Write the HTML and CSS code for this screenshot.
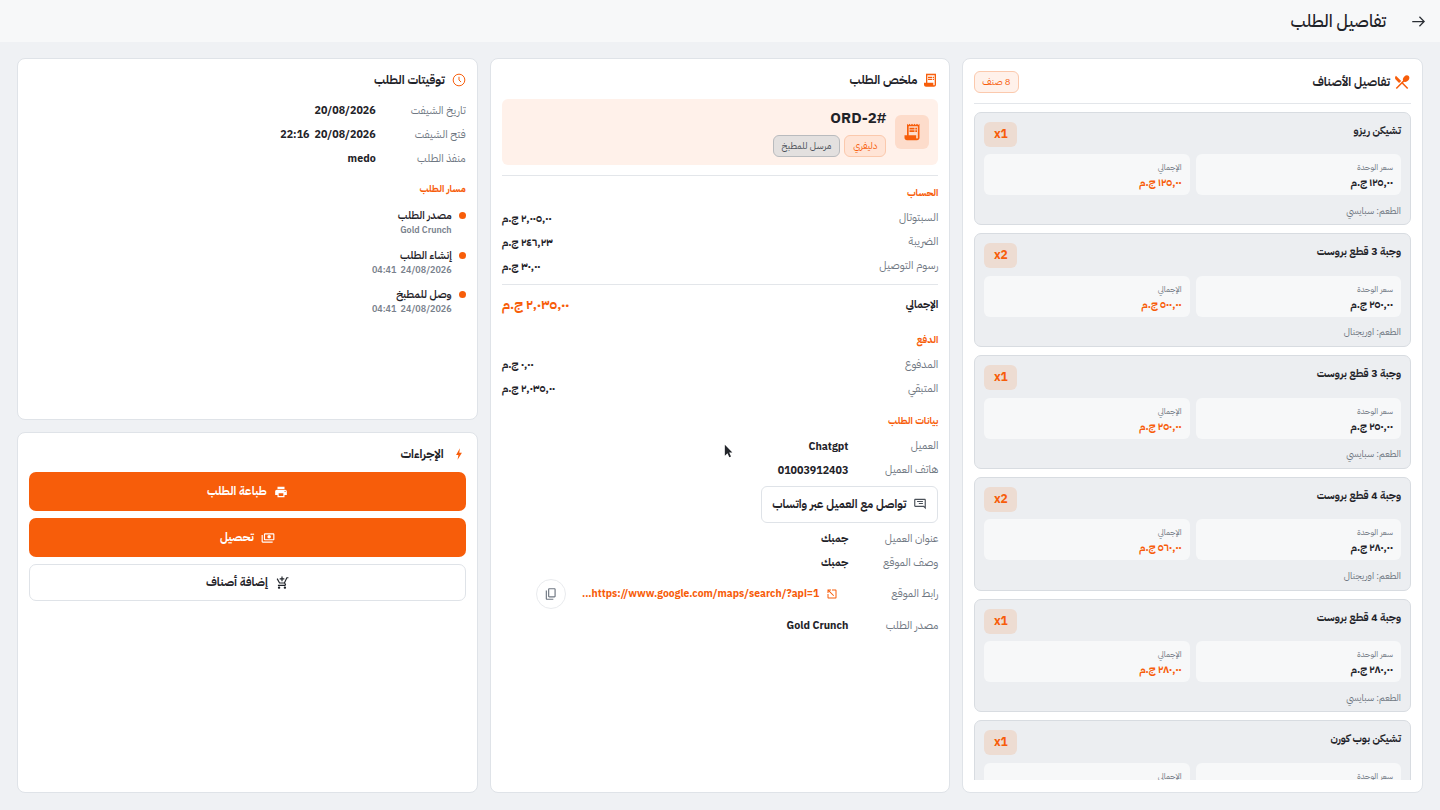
FILE: index.html
```html
<!DOCTYPE html>
<html lang="ar" dir="rtl">

<head>
    <meta charset="utf-8">
    <meta name="viewport" content="width=device-width, initial-scale=1.0">
    <title>تفاصيل الطلب</title>

    <link rel="stylesheet" href="styles.css">

</head>

<body>

    <header class="topbar">
        <svg class="back" viewBox="0 0 24 24"><path d="M2 12h19M13.500 4.500 21 12l-7.500 7.500" /></svg>
        <h1>تفاصيل الطلب</h1>
    </header>

    <main class="cols">

        <!-- الأصناف -->
        <section class="card">
            <div class="items-head">
                <h2 class="title">
                    <svg class="ico fork" viewBox="0 0 24 24"><path d="M8.1 13.34l2.83-2.83L3.91 3.5c-1.56 1.56-1.56 4.09 0 5.66l4.19 4.18zm6.78-1.81c1.53.71 3.68.21 5.27-1.38 1.91-1.91 2.28-4.65.81-6.12-1.46-1.46-4.2-1.1-6.12.81-1.59 1.59-2.09 3.74-1.38 5.27L3.7 19.87l1.41 1.41L12 14.41l6.88 6.88 1.41-1.41L13.41 13l1.47-1.47z" /></svg>
                    تفاصيل الأصناف
                </h2>
                <span class="count">8 صنف</span>
            </div>
            <div class="items">
                <article class="item">
                    <div class="item-top"><h3>تشيكن ريزو</h3><span class="qty">x1</span></div>
                    <div class="prices">
                        <div class="price"><small>سعر الوحدة</small><b>١٢٥,٠٠ ج.م</b></div>
                        <div class="price"><small>الإجمالي</small><b class="or">١٢٥,٠٠ ج.م</b></div>
                    </div>
                    <p class="taste">الطعم: سبايسي</p>
                </article>
                <article class="item">
                    <div class="item-top"><h3>وجبة 3 قطع بروست</h3><span class="qty">x2</span></div>
                    <div class="prices">
                        <div class="price"><small>سعر الوحدة</small><b>٢٥٠,٠٠ ج.م</b></div>
                        <div class="price"><small>الإجمالي</small><b class="or">٥٠٠,٠٠ ج.م</b></div>
                    </div>
                    <p class="taste">الطعم: اوريجنال</p>
                </article>
                <article class="item">
                    <div class="item-top"><h3>وجبة 3 قطع بروست</h3><span class="qty">x1</span></div>
                    <div class="prices">
                        <div class="price"><small>سعر الوحدة</small><b>٢٥٠,٠٠ ج.م</b></div>
                        <div class="price"><small>الإجمالي</small><b class="or">٢٥٠,٠٠ ج.م</b></div>
                    </div>
                    <p class="taste">الطعم: سبايسي</p>
                </article>
                <article class="item">
                    <div class="item-top"><h3>وجبة 4 قطع بروست</h3><span class="qty">x2</span></div>
                    <div class="prices">
                        <div class="price"><small>سعر الوحدة</small><b>٢٨٠,٠٠ ج.م</b></div>
                        <div class="price"><small>الإجمالي</small><b class="or">٥٦٠,٠٠ ج.م</b></div>
                    </div>
                    <p class="taste">الطعم: اوريجنال</p>
                </article>
                <article class="item">
                    <div class="item-top"><h3>وجبة 4 قطع بروست</h3><span class="qty">x1</span></div>
                    <div class="prices">
                        <div class="price"><small>سعر الوحدة</small><b>٢٨٠,٠٠ ج.م</b></div>
                        <div class="price"><small>الإجمالي</small><b class="or">٢٨٠,٠٠ ج.م</b></div>
                    </div>
                    <p class="taste">الطعم: سبايسي</p>
                </article>
                <article class="item">
                    <div class="item-top"><h3>تشيكن بوب كورن</h3><span class="qty">x1</span></div>
                    <div class="prices">
                        <div class="price"><small>سعر الوحدة</small></div>
                        <div class="price"><small>الإجمالي</small></div>
                    </div>
                </article>
            </div>
        </section>

        <!-- الملخص -->
        <section class="card summary">
            <h2 class="title">
                <svg class="ico receipt" viewBox="0 0 24 24"><path d="M19.500 3.500 18 2l-1.500 1.500L15 2l-1.500 1.500L12 2l-1.500 1.500L9 2 7.500 3.500 6 2v14H3v3c0 1.660 1.340 3 3 3h12c1.660 0 3-1.340 3-3V2l-1.500 1.500zM19 19c0 .55-.45 1-1 1s-1-.45-1-1v-3H8V5h11v14zM9 7h6v2H9zm7 0h2v2h-2zM9 10h6v2H9zm7 0h2v2h-2z" /></svg>
                ملخص الطلب
            </h2>
            <div class="hero">
                <div class="hero-ico">
                    <svg class="ico" viewBox="0 0 24 24"><path d="M19.500 3.500 18 2l-1.500 1.500L15 2l-1.500 1.500L12 2l-1.500 1.500L9 2 7.500 3.500 6 2v14H3v3c0 1.660 1.340 3 3 3h12c1.660 0 3-1.340 3-3V2l-1.500 1.500zM19 19c0 .55-.45 1-1 1s-1-.45-1-1v-3H8V5h11v14zM9 7h6v2H9zm7 0h2v2h-2zM9 10h6v2H9zm7 0h2v2h-2z" /></svg>
                </div>
                <div>
                    <div class="order-no">#ORD-2</div>
                    <div class="badges">
                        <span class="badge">دليفري</span>
                        <span class="badge grey">مرسل للمطبخ</span>
                    </div>
                </div>
            </div>

            <h4 class="sec first">الحساب</h4>
            <div class="row"><span>السبتوتال</span><b>٢,٠٠٥,٠٠ ج.م</b></div>
            <div class="row"><span>الضريبة</span><b>٢٤٦,٢٣ ج.م</b></div>
            <div class="row"><span>رسوم التوصيل</span><b>٣٠,٠٠ ج.م</b></div>
            <div class="total"><span>الإجمالي</span><b>٢,٠٣٥,٠٠ ج.م</b></div>

            <h4 class="sec">الدفع</h4>
            <div class="row"><span>المدفوع</span><b>٠,٠٠ ج.م</b></div>
            <div class="row"><span>المتبقي</span><b>٢,٠٣٥,٠٠ ج.م</b></div>

            <h4 class="sec">بيانات الطلب</h4>
            <div class="info"><span>العميل</span><b>Chatgpt</b></div>
            <div class="info"><span>هاتف العميل</span><b>01003912403</b></div>
            <button class="wa">
                <svg class="ico" viewBox="0 0 24 24"><path d="M20 4H4c-1.100 0-2 .9-2 2v16l4-4h14c1.100 0 2-.9 2-2V6c0-1.100-.9-2-2-2zm0 12H5.200L4 17.200V6h16v10zM7 8h10v1.600H7zm0 3.400h7V13H7z" transform="matrix(-1 0 0 1 24 -1)" /></svg>
                تواصل مع العميل عبر واتساب
            </button>
            <div class="info"><span>عنوان العميل</span><b>جمبك</b></div>
            <div class="info"><span>وصف الموقع</span><b>جمبك</b></div>
            <div class="info link-row">
                <span>رابط الموقع</span>
                <a class="maps">
                    <svg class="ico" viewBox="0 0 24 24"><path d="M19 19H5V5h7V3H5c-1.110 0-2 .9-2 2v14c0 1.100.89 2 2 2h14c1.100 0 2-.9 2-2v-7h-2v7zM14 3v2h3.590l-9.830 9.830 1.410 1.410L19 6.410V10h2V3h-7z" transform="matrix(-1 0 0 1 24 0)" /></svg>
                    https://www.google.com/maps/search/?api=1...
                </a>
                <button class="copy">
                    <svg viewBox="0 0 24 24"><path d="M9 18c-1.100 0-2-.9-2-2V4c0-1.100.9-2 2-2h9c1.100 0 2 .9 2 2v12c0 1.100-.9 2-2 2H9zm0-2h9V4H9v12zm-4 6c-1.100 0-2-.9-2-2V6h2v14h11v2H5z" /></svg>
                </button>
            </div>
            <div class="info"><span>مصدر الطلب</span><b>Gold Crunch</b></div>
        </section>

        <!-- العمود الأيسر -->
        <div class="side">
            <section class="card times">
                <h2 class="title">
                    <svg class="ico line" viewBox="0 0 24 24"><circle cx="12" cy="12" r="10" /><path d="M12 6.500V12l3.500 3.500" /></svg>
                    توقيتات الطلب
                </h2>
                <div class="info"><span>تاريخ الشيفت</span><b>20/08/2026</b></div>
                <div class="info"><span>فتح الشيفت</span><b>20/08/2026&nbsp; 22:16</b></div>
                <div class="info"><span>منفذ الطلب</span><b>medo</b></div>

                <h4 class="sec path">مسار الطلب</h4>
                <ul class="track">
                    <li><strong>مصدر الطلب</strong><em>Gold Crunch</em></li>
                    <li><strong>إنشاء الطلب</strong><em>24/08/2026&nbsp; 04:41</em></li>
                    <li><strong>وصل للمطبخ</strong><em>24/08/2026&nbsp; 04:41</em></li>
                </ul>
            </section>

            <section class="card actions">
                <h2 class="title">
                    <svg class="ico" viewBox="0 0 24 24"><path d="M13.500 2 7 13.500h4L9.500 22 17 10h-4.500z" /></svg>
                    الإجراءات
                </h2>
                <button class="btn solid">
                    <svg viewBox="0 0 24 24"><path d="M19 8H5c-1.660 0-3 1.340-3 3v6h4v4h12v-4h4v-6c0-1.660-1.340-3-3-3zm-3 11H8v-5h8v5zm3-7c-.55 0-1-.45-1-1s.45-1 1-1 1 .45 1 1-.45 1-1 1zm-1-9H6v4h12V3z" /></svg>
                    طباعة الطلب
                </button>
                <button class="btn solid">
                    <svg class="flip" viewBox="0 0 24 24"><path d="M19 14V6c0-1.100-.9-2-2-2H3c-1.100 0-2 .9-2 2v8c0 1.100.9 2 2 2h14c1.100 0 2-.9 2-2zm-2 0H3V6h14v8zm-7-7c-1.660 0-3 1.340-3 3s1.340 3 3 3 3-1.340 3-3-1.340-3-3-3zm13 0v11c0 1.100-.9 2-2 2H4v-2h17V7h2z" /></svg>
                    تحصيل
                </button>
                <button class="btn plain">
                    <svg class="flip" viewBox="0 0 24 24"><path d="M11 9h2V6h3V4h-3V1h-2v3H8v2h3v3zm-4 9c-1.100 0-1.990.9-1.990 2S5.900 22 7 22s2-.9 2-2-.9-2-2-2zm10 0c-1.100 0-1.990.9-1.990 2s.89 2 1.990 2 2-.9 2-2-.9-2-2-2zm-9.830-3.250l.03-.12.9-1.630h7.450c.75 0 1.410-.41 1.750-1.030l3.860-7.010L19.420 4h-.01l-1.100 2-2.760 5H8.530l-.13-.27L6.160 6l-.95-2-.94-2H1v2h2l3.600 7.590-1.350 2.450c-.16.28-.25.61-.25.96 0 1.100.9 2 2 2h12v-2H7.420c-.13 0-.25-.11-.25-.25z" /></svg>
                    إضافة أصناف
                </button>
            </section>
        </div>

    </main>

    <svg class="cursor" viewBox="0 0 12 18"><path d="M1 1v13l3.200-3 2.200 5 2-.9-2.200-4.900H10z" /></svg>

</body>

</html>
```

FILE: styles.css
```css
* {
    box-sizing: border-box;
}

html,
body {
    height: 100%;
}

body {
    margin: 0;
    background: #eff1f4;
    color: #1f2329;
    font-family: "IBM Plex Sans Arabic", "Noto Sans", sans-serif;
    font-size: 11px;
    overflow: hidden;
}

h1, h2, h3, h4, p, ul {
    margin: 0;
    padding: 0;
}

svg {
    fill: currentColor;
    flex: none;
}

.topbar {
    height: 42px;
    background: #f7f8f9;
    display: flex;
    align-items: center;
    gap: 25px;
    padding: 0 14px;
}

.back {
    width: 15px;
    height: 15px;
    fill: none;
    stroke: #2a2e34;
    stroke-width: 2;
}

.topbar h1 {
    font-size: 17px;
    font-weight: 500;
}

.cols {
    display: grid;
    grid-template-columns: 1fr 1fr 1fr;
    gap: 12px;
    height: 735px;
    margin: 16px 17px 0;
}

.card {
    background: #fff;
    border: 1px solid #dfe3e8;
    border-radius: 8px;
    padding: 12px 11px;
    min-height: 0;
}

.title {
    display: flex;
    align-items: center;
    gap: 8px;
    font-size: 12px;
    font-weight: 700;
    height: 18px;
}

.ico {
    width: 14px;
    height: 14px;
    color: #f75d0a;
}

.ico.line {
    fill: none;
    stroke: #f75d0a;
    stroke-width: 1.700;
    margin-left: -1px;
}

.ico.fork {
    width: 18px;
    height: 18px;
    margin-left: -5px;
}

.ico.receipt {
    width: 16px;
    height: 16px;
    margin-left: -3px;
}

/* items */
.items-head {
    display: flex;
    justify-content: space-between;
    align-items: center;
    padding-bottom: 10px;
    border-bottom: 1px solid #e3e6ea;
    margin-bottom: 7.500px;
    height: 33px;
}

.count {
    font-size: 9.500px;
    color: #f75d0a;
    background: #fff1ea;
    border: 1px solid #fbc9ad;
    border-radius: 6px;
    padding: 0 7px;
    height: 22px;
    line-height: 20px;
}

.items {
    display: flex;
    flex-direction: column;
    gap: 8px;
    height: 668.500px;
    overflow: hidden;
}

.item {
    flex: none;
    height: 113.800px;
    background: #eceef1;
    border: 1px solid #d8dce1;
    border-radius: 7px;
    padding: 9px;
}

.item-top {
    display: flex;
    justify-content: space-between;
    height: 25px;
    margin-bottom: 7.500px;
}

.item-top h3 {
    font-size: 10.500px;
    font-weight: 700;
    margin-top: 1px;
}

.qty {
    width: 33px;
    height: 25px;
    background: #eddcd2;
    border-radius: 6px;
    color: #f75d0a;
    font-weight: 700;
    font-size: 12px;
    text-align: center;
    line-height: 25px;
}

.prices {
    display: grid;
    grid-template-columns: 1fr 1fr;
    gap: 6px;
}

.price {
    background: #f7f8f9;
    border-radius: 6px;
    height: 41px;
    padding: 7px 8px 0;
}

.price small {
    display: block;
    font-size: 8.300px;
    line-height: 13px;
    color: #6f7782;
}

.price b {
    display: block;
    font-size: 10.500px;
    line-height: 18px;
}

.or {
    color: #f75d0a;
}

.taste {
    font-size: 9.500px;
    color: #6f7782;
    margin-top: 8.500px;
}

/* summary */
.hero {
    display: flex;
    align-items: flex-start;
    gap: 9px;
    height: 66px;
    margin-top: 10px;
    padding: 10px 9px 0;
    background: #fff1ea;
    border-radius: 6px;
}

.hero-ico {
    width: 34px;
    height: 34px;
    margin-top: 6px;
    background: #fddccb;
    border-radius: 6px;
    display: flex;
    align-items: center;
    justify-content: center;
}

.hero-ico .ico {
    width: 20px;
    height: 20px;
}

.order-no {
    font-size: 15px;
    font-weight: 700;
    line-height: 18px;
}

.badges {
    display: flex;
    gap: 4px;
    margin-top: 8px;
}

.badge {
    font-size: 9.500px;
    color: #f75d0a;
    background: #ffe4d6;
    border: 1px solid #fbc9ad;
    border-radius: 6px;
    height: 22px;
    line-height: 20px;
    padding: 0 8px;
}

.badge.grey {
    color: #4b5159;
    background: #e3e0df;
    border-color: #b9bbbe;
}

.sec {
    color: #f75d0a;
    font-size: 9.750px;
    font-weight: 700;
    margin-top: 14px;
    line-height: 14px;
}

.sec.first {
    border-top: 1px solid #e3e6ea;
    margin-top: 10px;
    padding-top: 10px;
}

.row,
.total {
    display: flex;
    justify-content: space-between;
    align-items: center;
    height: 24px;
}

.sec + .row {
    margin-top: 5.500px;
}

.row span,
.info span {
    color: #6f7782;
    font-size: 11px;
}

.row b,
.info b {
    font-size: 10.700px;
    font-weight: 700;
}

.total {
    border-top: 1px solid #e3e6ea;
    height: 40px;
    margin-top: 6px;
    font-size: 10.500px;
    font-weight: 700;
}

.total b {
    font-size: 13.500px;
    color: #f75d0a;
}

.total + .sec {
    margin-top: 9px;
}

.info {
    display: flex;
    align-items: center;
    height: 24px;
}

.info span {
    width: 90px;
    flex: none;
}

.sec + .info {
    margin-top: 5.500px;
}

.wa {
    display: flex;
    align-items: center;
    gap: 7px;
    height: 37px;
    margin: 4px 0 3.500px;
    padding: 0 10px;
    background: #fff;
    border: 1px solid #dfe3e8;
    border-radius: 6px;
    font: 700 11.500px "IBM Plex Sans Arabic", "Noto Sans", sans-serif;
    color: #1f2329;
}

.wa .ico {
    color: #4b5159;
}

.link-row {
    height: 39px;
}

.maps {
    display: flex;
    align-items: center;
    gap: 7px;
    margin-right: 10px;
    color: #f75d0a;
    font-size: 10.400px;
    font-weight: 700;
}

.maps .ico {
    width: 12px;
    height: 12px;
}

.copy {
    width: 30px;
    height: 30px;
    margin-right: 16px;
    padding: 7px;
    background: #fff;
    border: 1px solid #e9ebee;
    border-radius: 50%;
    color: #6f7782;
}

.copy svg {
    display: block;
    width: 14px;
    height: 14px;
}

/* side */
.side {
    display: grid;
    grid-template-rows: 362px 361px;
    gap: 12px;
    min-height: 0;
}

.times .title {
    margin-bottom: 9px;
}

.times .ico {
    margin-left: -1px;
}

.sec.path {
    margin-top: 12px;
}

.track {
    list-style: none;
    margin-top: 12px;
}

.track li {
    position: relative;
    padding-right: 14px;
    height: 39.500px;
}

.track li::before {
    content: "";
    position: absolute;
    right: 0;
    top: 4px;
    width: 7px;
    height: 7px;
    border-radius: 50%;
    background: #f75d0a;
}

.track strong {
    display: block;
    font-size: 10.700px;
    font-weight: 600;
    line-height: 15px;
}

.track em {
    display: block;
    font-style: normal;
    font-size: 9px;
    font-weight: 600;
    color: #79818c;
    line-height: 15px;
}

.actions .title {
    margin-bottom: 9px;
}

.btn {
    display: flex;
    align-items: center;
    justify-content: center;
    gap: 7px;
    width: 100%;
    border-radius: 7px;
    border: 0;
    font: 700 11.500px "IBM Plex Sans Arabic", "Noto Sans", sans-serif;
}

.btn svg {
    width: 14px;
    height: 14px;
}

.flip {
    transform: scaleX(-1);
}

.solid {
    height: 39px;
    background: #f75d0a;
    color: #fff;
    margin-bottom: 7px;
}

.plain {
    height: 37px;
    background: #fff;
    border: 1px solid #dfe3e8;
    color: #1f2329;
}

.cursor {
    position: absolute;
    left: 724px;
    top: 444px;
    width: 10px;
    height: 15px;
    fill: #23262b;
}
```
